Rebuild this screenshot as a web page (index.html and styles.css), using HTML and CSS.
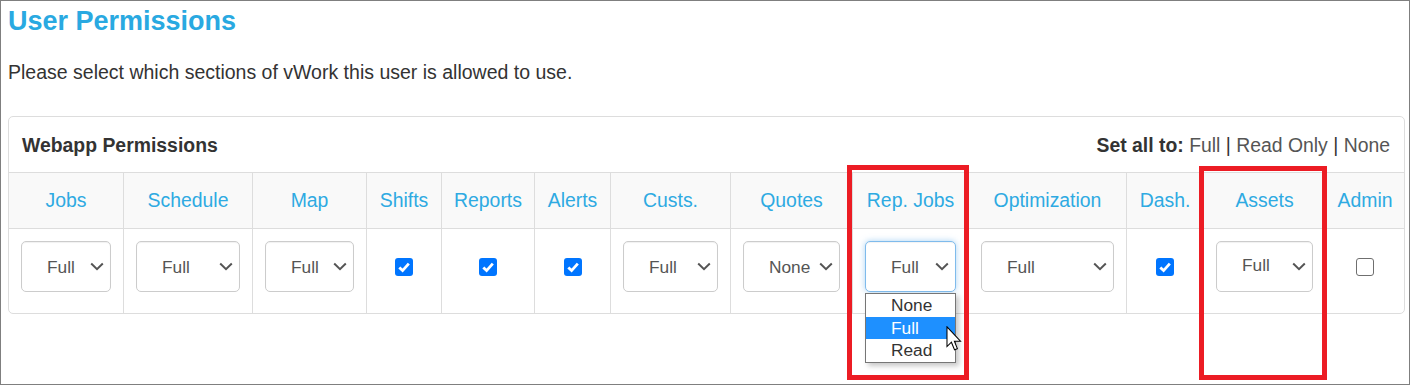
FILE: index.html
```html
<!DOCTYPE html>
<html lang="en">
<head>
<meta charset="utf-8">
<title>User Permissions</title>
<link rel="stylesheet" href="styles.css">
</head>
<body>
<div class="frame">
  <h1 class="title">User Permissions</h1>
  <p class="intro">Please select which sections of vWork this user is allowed to use.</p>

  <section class="card">
    <div class="card-head">
      <span class="card-title">Webapp Permissions</span>
      <span class="set-all"><b>Set all to:</b> <a class="set-link">Full</a> | <a class="set-link">Read Only</a> | <a class="set-link">None</a></span>
    </div>

    <div class="perm-grid">
      <div class="th first">Jobs</div>
      <div class="th">Schedule</div>
      <div class="th">Map</div>
      <div class="th">Shifts</div>
      <div class="th">Reports</div>
      <div class="th">Alerts</div>
      <div class="th">Custs.</div>
      <div class="th">Quotes</div>
      <div class="th">Rep. Jobs</div>
      <div class="th">Optimization</div>
      <div class="th">Dash.</div>
      <div class="th">Assets</div>
      <div class="th">Admin</div>

      <div class="td first"><div class="select-wrap"><select class="perm-select"><option>None</option><option selected>Full</option><option>Read</option></select></div></div>
      <div class="td"><div class="select-wrap"><select class="perm-select"><option>None</option><option selected>Full</option><option>Read</option></select></div></div>
      <div class="td"><div class="select-wrap"><select class="perm-select"><option>None</option><option selected>Full</option><option>Read</option></select></div></div>
      <div class="td check-cell"><input type="checkbox" class="perm-check" checked></div>
      <div class="td check-cell"><input type="checkbox" class="perm-check" checked></div>
      <div class="td check-cell"><input type="checkbox" class="perm-check" checked></div>
      <div class="td"><div class="select-wrap"><select class="perm-select"><option>None</option><option selected>Full</option><option>Read</option></select></div></div>
      <div class="td"><div class="select-wrap"><select class="perm-select"><option selected>None</option><option>Full</option><option>Read</option></select></div></div>
      <div class="td">
        <div class="select-wrap">
          <select class="perm-select focused"><option>None</option><option selected>Full</option><option>Read</option></select>
          <ul class="dropdown">
            <li class="dd-item">None</li>
            <li class="dd-item active">Full</li>
            <li class="dd-item">Read</li>
          </ul>
        </div>
      </div>
      <div class="td"><div class="select-wrap"><select class="perm-select"><option>None</option><option selected>Full</option><option>Read</option></select></div></div>
      <div class="td check-cell"><input type="checkbox" class="perm-check" checked></div>
      <div class="td"><div class="select-wrap"><select class="perm-select raised"><option>None</option><option selected>Full</option><option>Read</option></select></div></div>
      <div class="td check-cell"><input type="checkbox" class="perm-check"></div>
    </div>
  </section>

  <div class="mark mark-rep"></div>
  <div class="mark mark-assets"></div>

  <svg class="cursor" width="16" height="26" viewBox="0 0 12 20" aria-hidden="true">
    <path d="M0.6 0.6 L0.6 15.8 L4 12.5 L6.4 18.3 L8.6 17.4 L6.3 11.7 L11 11.7 Z" fill="#fff" stroke="#000" stroke-width="0.8" stroke-linejoin="miter"/>
  </svg>
</div>
</body>
</html>
```

FILE: styles.css
```css
* {
  box-sizing: border-box;
}

html, body {
  margin: 0;
  padding: 0;
  background: #fff;
}

body {
  font-family: "Liberation Sans", Arial, sans-serif;
  color: #333;
}

.frame {
  position: relative;
  width: 1410px;
  height: 385px;
  border: 1px solid #7f7f7f;
  padding: 0 4px 0 7px;
}

.title {
  margin: 4px 0 0;
  font-size: 27px;
  line-height: 32px;
  font-weight: bold;
  color: #29a9e1;
}

.intro {
  margin: 23px 0 0;
  font-size: 19.5px;
  line-height: 24px;
  color: #333;
}

.card {
  margin-top: 32px;
  border: 1px solid #ddd;
  border-radius: 5px;
  background: #fff;
}

.card-head {
  height: 55px;
  padding: 0 14px 0 13px;
  display: flex;
  align-items: center;
  justify-content: space-between;
  font-size: 19.4px;
  line-height: 24px;
}

.card-title {
  font-weight: bold;
  color: #333;
}

.set-all {
  color: #333;
}

.set-all b {
  color: #333;
}

.set-link {
  color: #555;
  text-decoration: none;
}

.perm-grid {
  display: grid;
  grid-template-columns: 114px 129px 114px 75px 93px 76px 120px 122px 116px 158px 77px 122px 79px;
}

.th {
  height: 56px;
  border-top: 1px solid #ddd;
  border-left: 1px solid #ddd;
  background: #f9f9f9;
  display: flex;
  align-items: center;
  justify-content: center;
  font-size: 19.4px;
  font-weight: normal;
  color: #2eaae2;
  white-space: nowrap;
}

.td {
  height: 85px;
  border-top: 1px solid #ddd;
  border-left: 1px solid #ddd;
  padding: 12px 12px 0 12px;
}

.th.first,
.td.first {
  border-left: none;
}

.select-wrap {
  position: relative;
}

.perm-select {
  -webkit-appearance: none;
  appearance: none;
  display: block;
  width: 100%;
  height: 51px;
  margin: 0;
  padding: 0 22px 0 25px;
  border: 1px solid #ccc;
  border-radius: 5px;
  background-color: #fff;
  background-image: url("data:image/svg+xml;utf8,<svg xmlns='http://www.w3.org/2000/svg' width='14' height='9' viewBox='0 0 14 9'><path d='M1.2 1.5 L7 7.2 L12.8 1.5' fill='none' stroke='%23555' stroke-width='2'/></svg>");
  background-repeat: no-repeat;
  background-position: right 6px center;
  font-family: "Liberation Sans", Arial, sans-serif;
  font-size: 17.3px;
  color: #555;
  box-shadow: inset 0 1px 1px rgba(0, 0, 0, 0.06);
}

.perm-select.raised {
  padding-bottom: 4px;
}

.perm-select.focused {
  border-color: #7fbbec;
  box-shadow: inset 0 1px 1px rgba(0, 0, 0, 0.05), 0 0 6px rgba(102, 175, 233, 0.55);
}

.check-cell {
  display: flex;
  justify-content: center;
  align-items: flex-start;
  padding-top: 29px;
}

.perm-check {
  -webkit-appearance: none;
  appearance: none;
  width: 18px;
  height: 18px;
  margin: 0;
  border: 1.6px solid #6f6f6f;
  border-radius: 3px;
  background: #fff;
}

.perm-check:checked {
  border: none;
  background-color: #0075ff;
  background-image: url("data:image/svg+xml;utf8,<svg xmlns='http://www.w3.org/2000/svg' width='18' height='18' viewBox='0 0 18 18'><path d='M4.3 9.4 L7.6 12.6 L13.8 5.6' fill='none' stroke='white' stroke-width='2.8'/></svg>");
  background-repeat: no-repeat;
  background-position: center;
}

.dropdown {
  position: absolute;
  top: calc(100% + 1px);
  left: 0;
  right: 0;
  margin: 0;
  padding: 0;
  list-style: none;
  background: #fff;
  border: 1px solid #767676;
  box-shadow: 3px 3px 5px rgba(0, 0, 0, 0.22);
  z-index: 2;
}

.dd-item {
  height: 22.5px;
  line-height: 22.5px;
  padding-left: 25px;
  font-size: 17.3px;
  color: #333;
}

.dd-item.active {
  background: #1e90ff;
  color: #fff;
}

.mark {
  position: absolute;
  border: 5px solid #ec1c24;
  pointer-events: none;
}

.mark-rep {
  left: 846px;
  top: 164px;
  width: 122px;
  height: 215px;
}

.mark-assets {
  left: 1198px;
  top: 165px;
  width: 128px;
  height: 214px;
}

.cursor {
  position: absolute;
  left: 945px;
  top: 325px;
  z-index: 3;
}
```
